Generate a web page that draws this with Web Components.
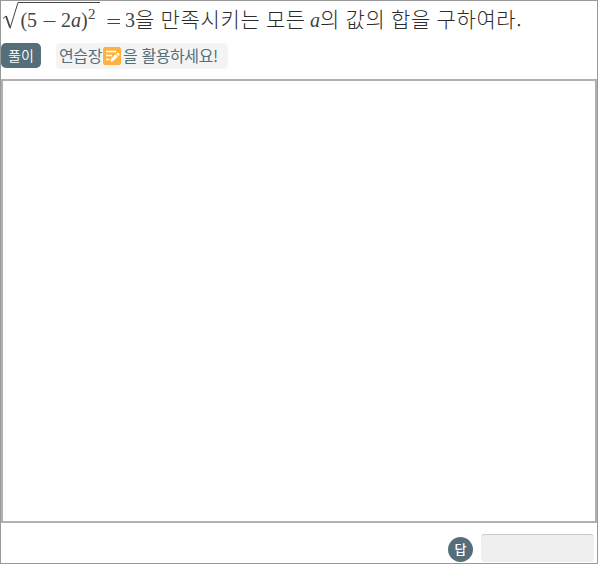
<!DOCTYPE html>
<html lang="ko"><head><meta charset="utf-8"><title>문제 풀이</title>
<style>html,body{margin:0;height:100%;background:#fff}</style></head>
<body><exercise-page></exercise-page>
<script>
const define=(name,html)=>customElements.define(name,class extends HTMLElement{
  constructor(){super();this.attachShadow({mode:'open'}).innerHTML=html;}
});
define('square-root',`<style>
:host{display:block;width:103px;height:36px;flex:none;white-space:normal}
svg{display:block}text{font-family:"Liberation Serif",serif;font-size:20px;fill:#444}
.i{font-style:italic}
</style><svg width="103" height="36" viewBox="1 1 103 36">
<path d="M3 18.5L6 16" stroke="#444" stroke-width="1" fill="none"/><path d="M6 16L10 27.5" stroke="#444" stroke-width="1.8" fill="none"/><path d="M10 28.5L18 2.5" stroke="#444" stroke-width="1" fill="none"/><path d="M18 2.5H100" stroke="#444" fill="none"/>
<text y="27"><tspan x="20.5">(</tspan><tspan x="27">5</tspan><tspan x="61">2</tspan><tspan class="i" x="71">a</tspan><tspan x="81">)</tspan></text><path d="M43.5 21.5H55.5" stroke="#444"/>
<text x="88" y="19" style="font-size:15px">2</text></svg>`);
define('question-line',`<style>
:host{display:flex;height:37px;color:#444;font:300 21px/35px "Noto Sans CJK KR",sans-serif;white-space:pre}
.m{font:400 20px/39px "Liberation Serif",serif}
.eq{width:21px;height:37px;flex:none}
.k{letter-spacing:.65px;word-spacing:-1px;color:#2c2c2c}
.three{width:10px}.m.a{font-style:italic;width:10px}
.first{width:175px}
</style><square-root></square-root><svg class="eq" viewBox="104 1 21 37"><path d="M107.5 19.5H120M107.5 23.5H120" stroke="#444" fill="none"/></svg><span class="m three">3</span><span class="k first">을 만족시키는 모든</span><span class="m a">a</span><span class="k">의 값의 합을 구하여라.</span>`);
define('solution-badge',`<style>:host{display:block;box-sizing:border-box;width:40px;height:25px;border-radius:5px;background:#546e7a;color:#fff;text-align:center;font:350 14px/24px "Noto Sans CJK KR",sans-serif}</style><slot></slot>`);
define('memo-icon',`<style>:host{display:block;width:18px;height:18px;margin:0 2px 0 1px;white-space:normal}svg{display:block}</style><svg width="18" height="18" viewBox="0 0 18 18"><rect width="18" height="18" rx="2.5" fill="#ffb13d"/><path d="M3 4.5H13M3 8.5H9M3 12.5H6.5" stroke="#fff" stroke-width="1.3"/><path d="M7.5 14.7L8.1 11.8L12.6 7.3L14.9 9.6L10.4 14.1Z M13.2 6.7L14.2 5.7Q14.7 5.3 15.2 5.8L16.5 7.1Q16.9 7.6 16.5 8L15.5 9Z" fill="#fff"/></svg>`);
define('hint-chip',`<style>:host{display:flex;align-items:center;box-sizing:border-box;width:172px;height:26px;padding-left:3px;border-radius:4px;background:#f4f4f4;color:#546e7a;font:400 16px/23px "Noto Sans CJK KR",sans-serif;letter-spacing:-.4px;white-space:pre}
.l{width:43px}.l,.r{display:block;margin-top:-2px}</style><span class="l">연습장</span><memo-icon></memo-icon><span class="r">을 활용하세요!</span>`);
define('answer-row',`<style>:host{display:flex;height:40px;padding-right:3px;justify-content:flex-end;align-items:flex-start;box-sizing:border-box}
.dot{width:25px;height:25px;border-radius:50%;background:#546e7a;color:#fff;font:500 13px/24px "Noto Sans CJK KR",sans-serif;text-align:center;margin:14px 8px 0 0}
.field{box-sizing:border-box;width:113px;height:28px;margin-top:11px;border-radius:4px;background:#efefef;border-top:1px solid #c8c8c8}</style><span class="dot">답</span><span class="field"></span>`);
define('exercise-page',`<style>
:host{display:flex;flex-direction:column;box-sizing:border-box;width:598px;height:564px;border:1px solid #999;background:#fff;overflow:hidden}
.tools{display:flex;gap:15px;height:36px;padding-top:5px;box-sizing:border-box;margin-bottom:5px}
.board{box-sizing:border-box;height:444px;flex:none;border:2px solid #b0b0b0}
</style><question-line></question-line><div class="tools"><solution-badge>풀이</solution-badge><hint-chip></hint-chip></div><div class="board"></div><answer-row></answer-row>`);
</script></body></html>
